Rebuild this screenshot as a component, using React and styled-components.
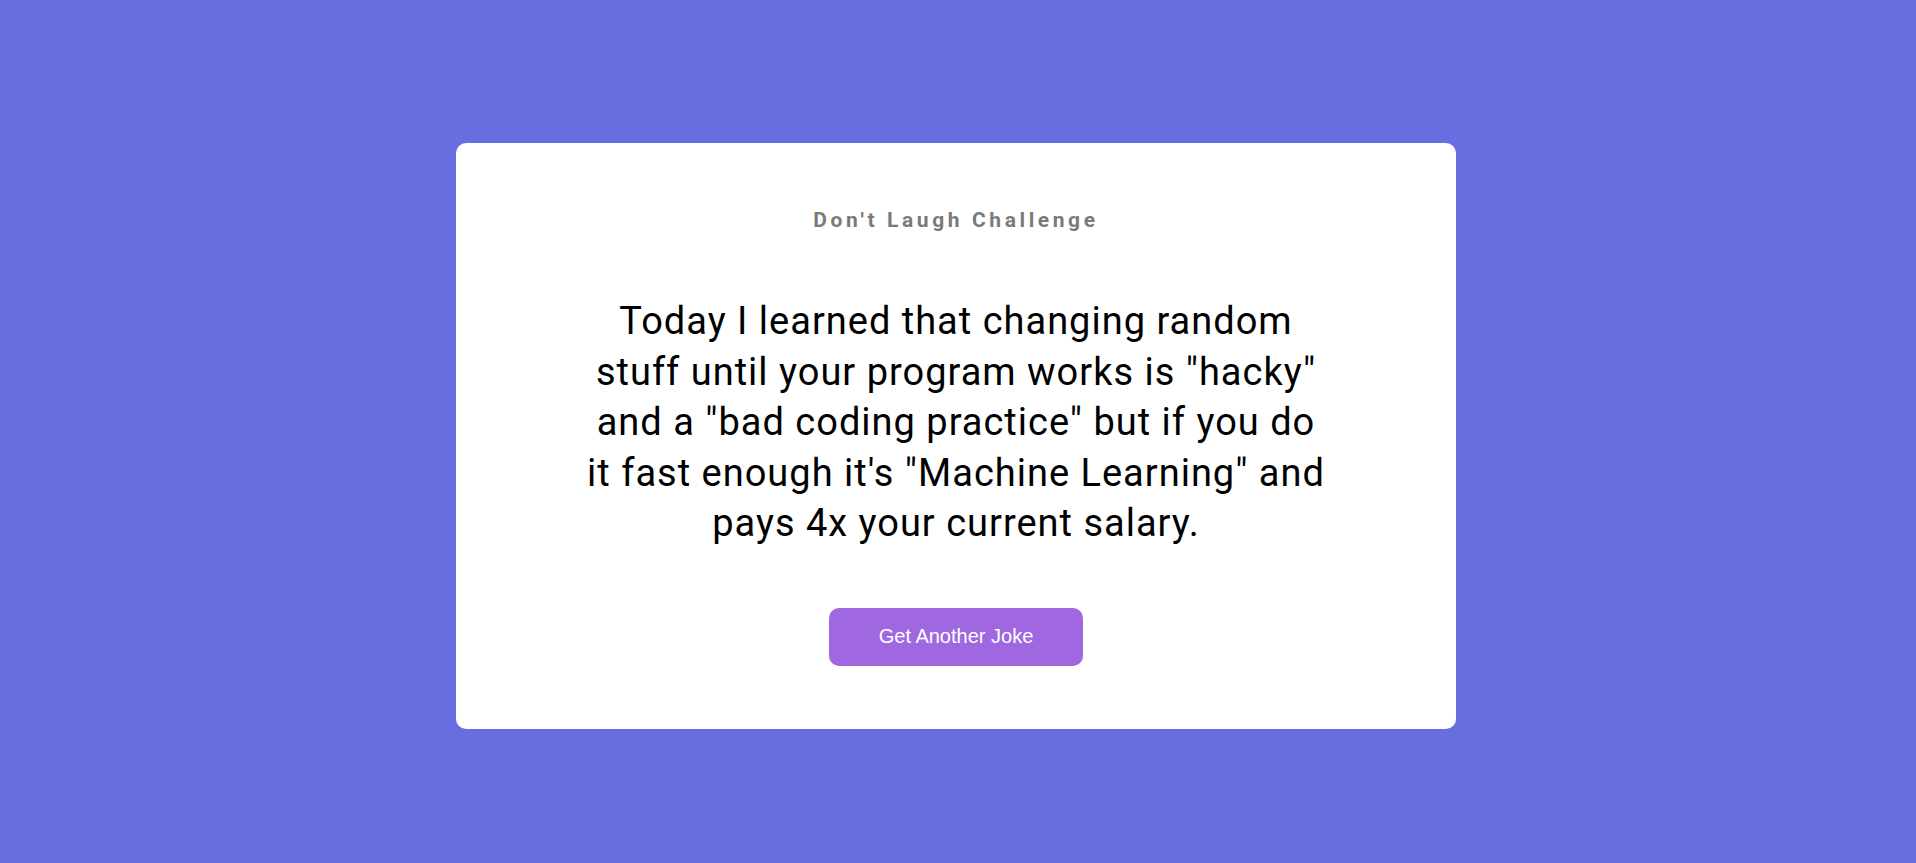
import React from "react";
import styled, { createGlobalStyle } from "styled-components";

const Global = createGlobalStyle`
  html, body { margin: 0; padding: 0; }
  body {
    background: #686de0;
    font-family: Roboto, "Noto Sans", sans-serif;
  }
`;

const Page = styled.main`
  min-height: 863px;
  box-sizing: border-box;
  display: flex;
  justify-content: center;
  align-items: flex-start;
  padding: 143px 4px 0 0;
`;

const Card = styled.section`
  width: 1000px;
  height: 586px;
  box-sizing: border-box;
  background: #ffffff;
  border-radius: 10px;
  padding: 65px 100px 0;
  display: flex;
  flex-direction: column;
  align-items: center;
  text-align: center;
`;

const Heading = styled.h3`
  margin: 0;
  font-family: Roboto, sans-serif;
  font-weight: 700;
  font-size: 21px;
  line-height: 24px;
  letter-spacing: 3.6px;
  color: #7a7a7a;
`;

const Joke = styled.p`
  margin: 64px 0 0;
  font-family: Roboto, sans-serif;
  font-size: 38px;
  line-height: 50.5px;
  color: #000;
  letter-spacing: 1px;
  max-width: 745px;
`;

const Button = styled.button`
  margin-top: 59px;
  width: 254px;
  height: 58px;
  flex-shrink: 0;
  border: none;
  border-radius: 10px;
  background: #9f68e0;
  color: #fff;
  font-family: "Liberation Sans", Arial, sans-serif;
  font-size: 20px;
  cursor: pointer;
`;

export default function App() {
  return (
    <>
      <Global />
      <Page>
        <Card>
          <Heading>Don't Laugh Challenge</Heading>
          <Joke>
            Today I learned that changing random stuff until your program works is "hacky" and a "bad coding practice" but if you do it fast enough it's "Machine Learning" and pays 4x your current salary.
          </Joke>
          <Button>Get Another Joke</Button>
        </Card>
      </Page>
    </>
  );
}
